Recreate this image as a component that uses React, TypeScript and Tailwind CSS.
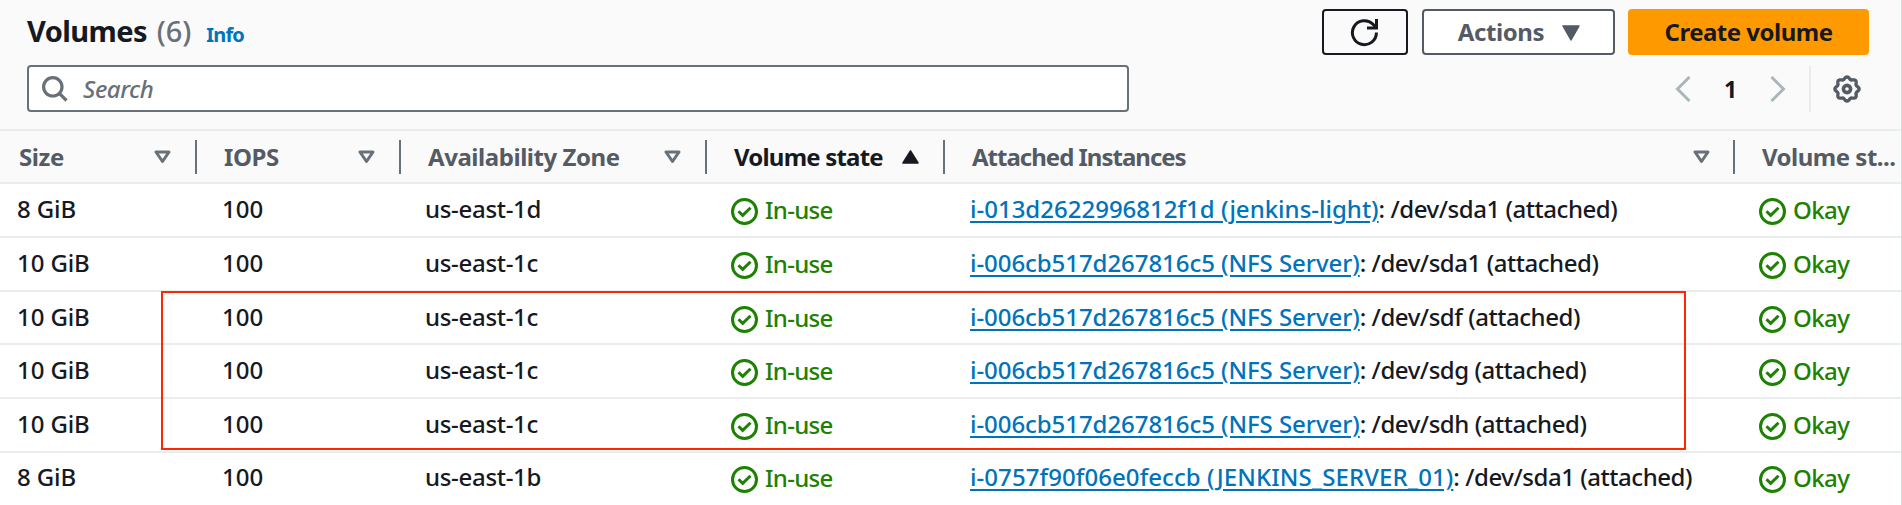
import React from "react";

type VolumeRow = { size: string; zone: string; link: string; linkSpacing: string; rest: string; height: string };

const rows: VolumeRow[] = [
  { size: "8 GiB", zone: "us-east-1d", link: "i-013d2622996812f1d (jenkins-light)", linkSpacing: "tracking-normal", rest: ": /dev/sda1 (attached)", height: "h-[54px] pb-[3px]" },
  { size: "10 GiB", zone: "us-east-1c", link: "i-006cb517d267816c5 (NFS Server)", linkSpacing: "tracking-[-0.06px]", rest: ": /dev/sda1 (attached)", height: "h-[54px] pb-[3px]" },
  { size: "10 GiB", zone: "us-east-1c", link: "i-006cb517d267816c5 (NFS Server)", linkSpacing: "tracking-[-0.06px]", rest: ": /dev/sdf (attached)", height: "h-[53px] pb-[2px]" },
  { size: "10 GiB", zone: "us-east-1c", link: "i-006cb517d267816c5 (NFS Server)", linkSpacing: "tracking-[-0.06px]", rest: ": /dev/sdg (attached)", height: "h-[54px] pb-[3px]" },
  { size: "10 GiB", zone: "us-east-1c", link: "i-006cb517d267816c5 (NFS Server)", linkSpacing: "tracking-[-0.06px]", rest: ": /dev/sdh (attached)", height: "h-[54px] pb-[3px]" },
  { size: "8 GiB", zone: "us-east-1b", link: "i-0757f90f06e0feccb (JENKINS_SERVER_01)", linkSpacing: "tracking-[0.07px]", rest: ": /dev/sda1 (attached)", height: "h-[54px] pb-[5px]" },
];

const columns = "grid grid-cols-[197px_204px_306px_238px_790px_1fr]";

// Eight-lobed outline of the settings gear.
const gearPath =
  Array.from({ length: 96 }, (_, i) => {
    const angle = (i / 96) * Math.PI * 2;
    const radius = 11 + 1.1 * Math.cos(8 * angle);
    return `${i === 0 ? "M" : "L"}${(14 + radius * Math.cos(angle)).toFixed(2)} ${(14 + radius * Math.sin(angle)).toFixed(2)}`;
  }).join("") + "Z";

function SortDown() {
  return (
    <svg width="17" height="14" viewBox="0 0 17 14" fill="none" stroke="#687078" strokeWidth="3" strokeLinejoin="round">
      <path d="M2 2h13L8.5 11.5z" />
    </svg>
  );
}

function SortUp() {
  return (
    <svg width="17" height="14" viewBox="0 0 17 14" fill="#16191f" stroke="#16191f" strokeWidth="1.5" strokeLinejoin="round">
      <path d="M1 13h15L8.5 1z" />
    </svg>
  );
}

function Status({ label, text }: { label: string; text: string }) {
  return (
    <span className="flex items-center pt-[2px] text-[#1d8102]">
      <svg className="mt-1 shrink-0" width="27" height="27" viewBox="0 0 27 27" fill="none" stroke="#1d8102" strokeWidth="3">
        <circle cx="13.5" cy="13.5" r="12" />
        <path d="M7.5 13.2l4.2 4.2 7.8-7.6" />
      </svg>
      <span className={text}>{label}</span>
    </span>
  );
}

function HeaderCell({ label, text, gap = "gap-[24px]", sort, active, last, first }: { label: string; text: string; gap?: string; sort?: "up" | "down"; active?: boolean; last?: boolean; first?: boolean }) {
  return (
    <div className={`flex h-full min-w-0 items-center justify-between ${first ? "pl-[19px]" : "pl-[27px]"}`}>
      <span className={`whitespace-nowrap font-bold ${text} ${active ? "text-[#16191f]" : "text-[#545b64]"}`}>{label}</span>
      {!last && (
        <span className={`flex items-center ${gap}`}>
          {sort === "up" ? <SortUp /> : <SortDown />}
          <span className="h-[34px] w-[2px] bg-[#687078]" />
        </span>
      )}
    </div>
  );
}

export default function App() {
  return (
    <div className="relative h-[505px] w-[1902px] overflow-hidden border-r border-[#d5dbdb] bg-white font-['Noto_Sans',sans-serif] text-[24px] leading-[32px] text-[#16191f]">
      <header className="h-[129px] bg-[#fafafa] pl-[27px] pr-[32px] pt-[9px]">
        <div className="flex h-[46px] items-start justify-between">
          <div className="flex items-baseline pt-[2px]">
            <h1 className="text-[29px] font-bold leading-[40px] tracking-[-0.6px]">Volumes</h1>
            <span className="ml-[10px] text-[29px] font-medium leading-[40px] tracking-[-0.1px] text-[#687078]">(6)</span>
            <a className="ml-[15px] text-[20px] font-bold leading-[28px] tracking-[-0.8px] text-[#0073bb]">Info</a>
          </div>
          <div className="flex">
            <button className="flex h-[46px] w-[86px] items-center justify-center rounded-[4px] border-2 border-[#16191f]">
              <svg width="30" height="30" viewBox="0 0 30 30" fill="none" stroke="#16191f" strokeWidth="3">
                <path d="M26.4 15.5a12 12 0 1 1-3.4-8.2l3 3.2" />
                <path d="M26.5 2v9h-9.5" />
              </svg>
            </button>
            <button className="ml-[14px] flex h-[46px] w-[193px] items-center rounded-[4px] border-2 border-[#545b64] bg-white pl-[33px] font-bold text-[#545b64]">
              <span className="w-[88px] tracking-[-0.4px]">Actions</span>
              <svg className="ml-[17px] mt-[2px]" width="18" height="16" viewBox="0 0 18 16" fill="#545b64" stroke="#545b64" strokeWidth="1.5" strokeLinejoin="round">
                <path d="M1 1h16L9 15z" />
              </svg>
            </button>
            <button className="ml-[13px] flex h-[46px] w-[241px] items-center justify-center whitespace-nowrap rounded-[4px] bg-[#ff9900] font-bold tracking-[-0.5px]">Create volume</button>
          </div>
        </div>
        <div className="mt-[10px] flex h-[47px] justify-between">
          <div className="flex h-[47px] w-[1102px] items-center rounded-[4px] border-2 border-[#687078] bg-white pl-[13px]">
            <svg width="26" height="26" viewBox="0 0 26 26" fill="none" stroke="#687078" strokeWidth="3.2">
              <circle cx="10.8" cy="10.8" r="9.2" />
              <path d="M17.3 17.3l7.2 7.2" />
            </svg>
            <span className="ml-[15px] font-medium italic tracking-[-0.4px] text-[#687078]">Search</span>
          </div>
          <div className="flex items-center pr-[8px]">
            <svg width="16" height="26" viewBox="0 0 16 26" fill="none" stroke="#aab7b8" strokeWidth="3">
              <path d="M14.5 1L2.5 13l12 12" />
            </svg>
            <span className="w-[79px] text-center text-[23px] font-bold">1</span>
            <svg width="16" height="26" viewBox="0 0 16 26" fill="none" stroke="#aab7b8" strokeWidth="3">
              <path d="M1.5 1l12 12-12 12" />
            </svg>
            <span className="ml-[23px] mr-[22px] h-[46px] w-[2px] bg-[#eaeded]" />
            <svg width="28" height="28" viewBox="0 0 28 28" fill="none" stroke="#545b64">
              <path d={gearPath} strokeWidth="3.3" />
              <circle cx="14" cy="14" r="3.6" strokeWidth="3.6" />
            </svg>
          </div>
        </div>
      </header>

      <div className={`h-[55px] border-y-2 border-[#eaeded] bg-[#fafafa] ${columns}`}>
        <HeaderCell label="Size" text="tracking-[-0.4px]" first />
        <HeaderCell label="IOPS" text="tracking-[-0.4px]" />
        <HeaderCell label="Availability Zone" text="tracking-[-0.45px]" />
        <HeaderCell label="Volume state" text="tracking-[-0.8px]" sort="up" active />
        <HeaderCell label="Attached Instances" text="tracking-[-1px]" gap="gap-[23px]" />
        <HeaderCell label="Volume st..." text="tracking-[-0.5px]" last />
      </div>

      {rows.map((row, i) => (
        <div key={i} className={`${row.height} items-center whitespace-nowrap border-b-2 border-[#eaeded] font-medium ${columns}`}>
          <span className="pl-[17px] tracking-[-0.1px]">{row.size}</span>
          <span className="pl-[25px]">100</span>
          <span className="pl-[24px] tracking-[-0.3px]">{row.zone}</span>
          <span className="pl-[24px]"><Status label="In-use" text="ml-[7px] tracking-[-0.7px]" /></span>
          <span className="pl-[25px]">
            <a className={`text-[#0073bb] underline decoration-[1.5px] underline-offset-[3px] ${row.linkSpacing}`}>{row.link}</a>
            <span className="tracking-[-0.45px]">{row.rest}</span>
          </span>
          <span className="pl-[24px]"><Status label="Okay" text="ml-[7px] tracking-[-0.6px]" /></span>
        </div>
      ))}

      <div className="pointer-events-none absolute left-[161px] top-[291px] h-[159px] w-[1525px] border-2 border-[#ff2600]" />
    </div>
  );
}
